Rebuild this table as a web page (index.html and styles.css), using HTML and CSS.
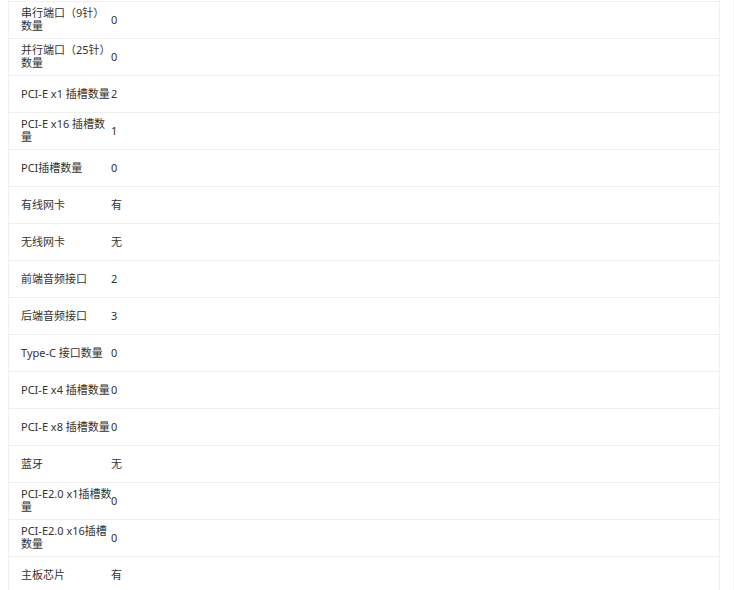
FILE: index.html
```html
<!DOCTYPE html>
<html lang="zh-CN">
<head>
<meta charset="utf-8">
<link rel="stylesheet" href="styles.css">
</head>
<body>
<div class="page">
  <div class="table">
    <div class="row"><div class="label">串行端口（9针）数量</div><div class="value">0</div></div>
    <div class="row"><div class="label">并行端口（25针）数量</div><div class="value">0</div></div>
    <div class="row"><div class="label">PCI-E x1 插槽数量</div><div class="value">2</div></div>
    <div class="row"><div class="label">PCI-E x16 插槽数量</div><div class="value">1</div></div>
    <div class="row"><div class="label">PCI插槽数量</div><div class="value">0</div></div>
    <div class="row"><div class="label">有线网卡</div><div class="value">有</div></div>
    <div class="row"><div class="label">无线网卡</div><div class="value">无</div></div>
    <div class="row"><div class="label">前端音频接口</div><div class="value">2</div></div>
    <div class="row"><div class="label">后端音频接口</div><div class="value">3</div></div>
    <div class="row"><div class="label">Type-C 接口数量</div><div class="value">0</div></div>
    <div class="row"><div class="label">PCI-E x4 插槽数量</div><div class="value">0</div></div>
    <div class="row"><div class="label">PCI-E x8 插槽数量</div><div class="value">0</div></div>
    <div class="row"><div class="label">蓝牙</div><div class="value">无</div></div>
    <div class="row"><div class="label">PCI-E2.0 x1插槽数量</div><div class="value">0</div></div>
    <div class="row"><div class="label">PCI-E2.0 x16插槽数量</div><div class="value">0</div></div>
    <div class="row"><div class="label">主板芯片</div><div class="value">有</div></div>
  </div>
  <div class="edge"></div>
</div>
</body>
</html>
```

FILE: styles.css
```css
html, body {
  margin: 0;
  padding: 0;
  background: #fff;
  height: 590px;
  overflow: hidden;
}
.page {
  display: flex;
  height: 590px;
  font-family: "Noto Sans", "Noto Sans CJK SC", sans-serif;
  font-size: 11px;
  color: #333;
}
.table {
  margin-left: 8px;
  width: 710px;
  border-left: 1px solid #f0f0f0;
  border-right: 1px solid #f0f0f0;
  padding-top: 1px;
  flex: none;
}
.edge {
  margin-left: 13px;
  width: 1px;
  background: #f2f6fd;
}
.row {
  box-sizing: border-box;
  display: flex;
  align-items: center;
  height: 37px;
  padding-bottom: 2px;
  border-top: 1px solid #f0f0f0;
}
.label {
  width: 92px;
  margin-right: -2px;
  padding-left: 12px;
  line-height: 13px;
  word-break: break-all;
  flex: none;
}
.value {
  line-height: 13px;
}
```
